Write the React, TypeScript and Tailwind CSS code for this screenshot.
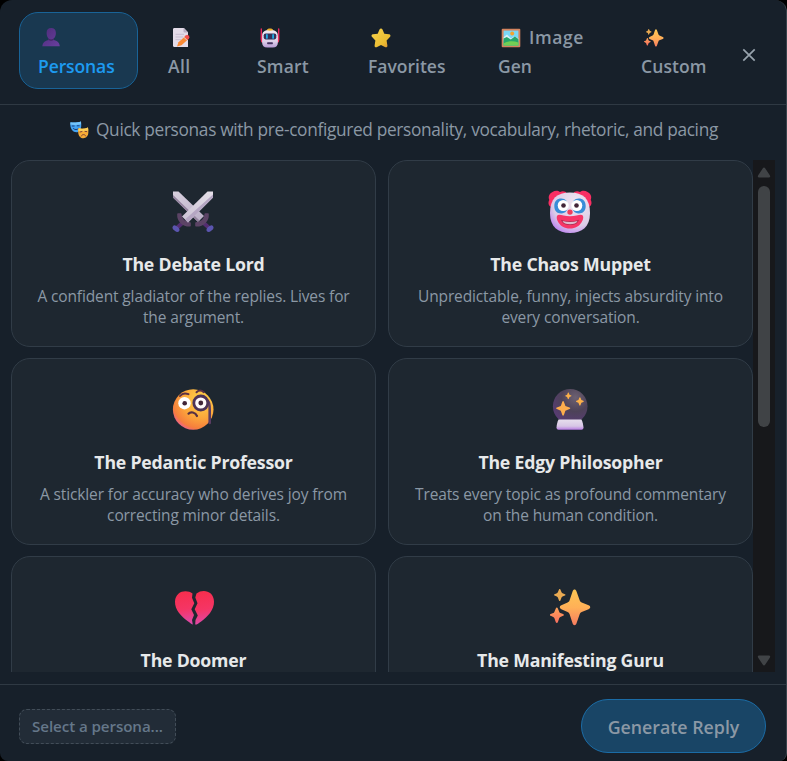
import type { ReactNode } from "react";

function Svg({ box, className, children }: { box: string; className: string; children: ReactNode }) {
  return (
    <svg viewBox={box} className={className} fill="none" aria-hidden="true">
      {children}
    </svg>
  );
}

function UserIcon() {
  return (
    <Svg box="0 0 18 19" className="h-[19px] w-[18px]">
      <defs>
        <linearGradient id="user" x1="0" y1="0" x2="1" y2="1">
          <stop stopColor="#4c2c78" />
          <stop offset="1" stopColor="#6a3fa0" />
        </linearGradient>
      </defs>
      <path d="M4.6 5C4.6 1.8 6.2 0 9.2 0s4.700 1.800 4.700 5c0 2.700-1 4.600-2.300 5.600v1.500c3.500.5 5.900 2.500 6.200 6.200H.3c.3-3.700 2.600-5.700 6.200-6.200v-1.600C5.400 9.400 4.600 7.500 4.600 5Z" fill="url(#user)" />
      <path d="M6.500 10.500c1.600 1.300 3.500 1.300 5.100.1v1.500c-1.500.8-3.500.8-5.100 0Z" fill="#412463" />
    </Svg>
  );
}

function MemoIcon() {
  return (
    <Svg box="0 0 18 19" className="h-[19px] w-[18px]">
      <path d="M2 0h10l4 4.200V19H2a1.500 1.500 0 0 1-1-1.500v-16A1.500 1.500 0 0 1 2 0Z" fill="#e4dce9" />
      <path d="m11.500 0 4.500 4.500h-3.500a1 1 0 0 1-1-1Z" fill="#b9afc4" />
      <path d="M3.500 6.300H12M3.500 9H11M3.500 11.700H9" stroke="#c7bdd1" />
      <path d="m6.500 14.300 7-6.400 3 3-7 6.400L5 18.500Z" fill="#f98a35" />
      <path d="m12.500 8.800 1.600-1.500a1.500 1.500 0 0 1 2 0l1 1a1.500 1.500 0 0 1 0 2L15.500 12Z" fill="#f2504e" />
      <path d="m12 9.300 3 3" stroke="#d8d1df" />
    </Svg>
  );
}

function RobotIcon() {
  return (
    <Svg box="0 0 20 20" className="h-5 w-5">
      <defs>
        <linearGradient id="robot" x1="0" y1="0" x2="0" y2="1">
          <stop stopColor="#f1e9f3" />
          <stop offset=".65" stopColor="#ded1e8" />
          <stop offset="1" stopColor="#b79ad5" />
        </linearGradient>
      </defs>
      <path d="M1.300 1v11M18.700 1v11" stroke="#e72860" strokeWidth="1.400" strokeLinecap="round" />
      <path d="M1 8.500h2v6H2a1 1 0 0 1-1-1ZM17 8.500h2v5a1 1 0 0 1-1 1h-1Z" fill="#ef315f" />
      <path d="M10 1.800c5.500 0 7.900 2.300 7.900 6.200v6.200c0 3.500-1.700 5.400-5.200 5.400H7.300c-3.500 0-5.200-1.900-5.200-5.400V8c0-3.900 2.400-6.200 7.900-6.200Z" fill="url(#robot)" />
      <path d="M6.700 2.300C7 1 8.300.4 10 .4s3 .6 3.300 1.900c-2 .6-4.600.6-6.600 0Z" fill="#eaae2f" />
      <rect x="3.700" y="5.500" width="12.600" height="5.900" rx="1.800" fill="#373057" />
      <path d="M6.900 6.900v3.100M13.100 6.900v3.100" stroke="#1fb4ef" strokeWidth="1.700" strokeLinecap="round" />
      <rect x="7.100" y="14.300" width="5.800" height="2" rx=".7" fill="#43315f" />
    </Svg>
  );
}

function StarIcon() {
  return (
    <Svg box="0 0 20 20" className="h-5 w-5">
      <defs>
        <linearGradient id="star" x1="0" y1="0" x2="1" y2="1">
          <stop stopColor="#f7d44d" />
          <stop offset=".7" stopColor="#ebbc31" />
          <stop offset="1" stopColor="#d98b31" />
        </linearGradient>
      </defs>
      <path d="M8.500 1.500c.7-1.300 2.300-1.300 3 0l1.800 4.200 4.700.6c1.500.2 2 1.700.9 2.800l-3.300 3.300.8 5c.2 1.600-1.200 2.400-2.500 1.700L10 17l-3.900 2.100c-1.300.7-2.700-.1-2.500-1.700l.8-5-3.300-3.300C0 8 .5 6.500 2 6.300l4.700-.6Z" fill="url(#star)" />
    </Svg>
  );
}

function PictureIcon() {
  return (
    <Svg box="0 0 20 20" className="h-5 w-5">
      <rect x=".7" y=".7" width="18.600" height="18.600" rx="1" fill="#d5845e" />
      <rect x="2.600" y="2.600" width="14.800" height="14.800" fill="#7bd8f6" />
      <path d="M2.600 9.200 6 6.500l4 4 3-2 4.400 1.700v2.400H2.600Z" fill="#d7eff9" />
      <path d="m2.600 10.600 3.200-1.500 4 2.300 4-2.800 3.600 2.400v6.400H2.600Z" fill="#26a66b" />
      <path d="M2.600 15.300c4-2 9-3 14.800-.8v2.900H2.600Z" fill="#72cf54" />
      <circle cx="11.200" cy="5.500" r="2" fill="#f5a22d" />
    </Svg>
  );
}

function SparklesIcon({ className }: { className: string }) {
  return (
    <Svg box="0 0 42 38" className={className}>
      <defs>
        <linearGradient id="spark" x1="0" y1="0" x2="0" y2="1">
          <stop stopColor="#fcc653" />
          <stop offset=".5" stopColor="#ffb057" />
          <stop offset="1" stopColor="#f77c60" />
        </linearGradient>
        <linearGradient id="sparkRed" x1="0" y1="0" x2="0" y2="1">
          <stop stopColor="#fba259" />
          <stop offset="1" stopColor="#fa705f" />
        </linearGradient>
      </defs>
      <path d="M23.200 2.300c.8-2.300 3.100-2.300 3.900 0l3.400 9.500c.4 1 1 1.600 2 2l7.100 3c2.300.9 2.300 3.200 0 4.100l-7.100 2.800c-1 .4-1.600 1-2 2l-3.400 9.800c-.8 2.300-3.100 2.300-3.900 0L20 25.700c-.4-1-1-1.600-2-2l-6.400-2.800c-2.200-.9-2.200-3.200 0-4.100l6.400-3c1-.4 1.600-1 2-2Z" fill="url(#spark)" />
      <path d="M9.200.4c.4-.7 1-.7 1.400 0l1.200 2.900c.2.500.5.800 1 1l2.500 1c.7.300.7 1.100 0 1.400l-2.500 1c-.5.200-.8.500-1 1l-1.200 3c-.4.700-1 .7-1.400 0L8 8.700c-.2-.5-.5-.8-1-1l-2.400-1c-.7-.3-.7-1.100 0-1.400l2.400-1c.5-.2.800-.5 1-1Z" fill="#e9aa52" />
      <path d="M5.900 19.900c.5-1.100 1.600-1.100 2.100 0l1.500 3.600c.2.600.6.900 1.100 1.100l2.800 1.100c1.100.4 1.100 1.500 0 1.900l-2.800 1.200c-.5.200-.9.500-1.100 1.100L8 34.100c-.5 1.100-1.600 1.100-2.100 0l-1.500-4.200c-.2-.6-.6-.9-1.100-1.100L.6 27.600c-1.100-.4-1.100-1.500 0-1.900l2.700-1.100c.5-.2.900-.5 1.100-1.100Z" fill="url(#sparkRed)" />
    </Svg>
  );
}

function MasksIcon() {
  return (
    <Svg box="0 0 19 18" className="h-[18px] w-[19px]">
      <path d="M.5 1.200C2.500 2 8 1.600 11 .5c.5 4 .5 7-1.500 9.200C7.500 12.200 4 11.500 2 9 .4 6.800 0 4 .5 1.200Z" fill="#43a2f2" />
      <path d="M.5 1.200C3 2 8 1.600 11 .5v2.700C7 4.200 3.500 4.200.3 3.500Z" fill="#75c4fa" />
      <path d="M2.200 5h2m3-.2h2M3.500 7.600c1.500 1.500 3.500 1.400 5-.1" stroke="#1c3f78" strokeWidth="1" strokeLinecap="round" />
      <path d="M8.500 7.300c3 .9 6.500.5 9.500-.7.600 4 .6 7-1 9-2.300 2.500-5.600 2-7.400-.2-1.500-2-1.700-5-1.100-8.100Z" fill="#f7ac36" />
      <path d="M8.500 7.300c3 .9 6.500.5 9.500-.7l.3 3c-3.300 1-6.500 1-9.900.3Z" fill="#fbcf59" />
      <path d="m10.100 11 1.900-.5m3-.1 1.700.2M11.300 15c1-2 3.500-2 4.500 0" stroke="#7c4139" strokeWidth="1" strokeLinecap="round" />
    </Svg>
  );
}

function SwordsIcon() {
  return (
    <Svg box="0 0 44 44" className="mt-[1px] h-11 w-11">
      <defs>
        <linearGradient id="bladeA" x1="0" y1="1" x2="1" y2="0">
          <stop stopColor="#c9c0d3" />
          <stop offset="1" stopColor="#e6e0e9" />
        </linearGradient>
        <linearGradient id="bladeB" x1="0" y1="0" x2="1" y2="1">
          <stop stopColor="#d8d0de" />
          <stop offset="1" stopColor="#b9adc6" />
        </linearGradient>
      </defs>
      <path d="m5.800 38 7.700-7M38.200 38l-7.700-7" stroke="#532d70" strokeWidth="4" />
      <ellipse cx="5" cy="38.700" rx="4" ry="2.400" transform="rotate(40 5 38.700)" fill="#5b55af" />
      <ellipse cx="39" cy="38.700" rx="4" ry="2.400" transform="rotate(-40 39 38.700)" fill="#5b55af" />
      <path d="M2 1.500h5.500l25.500 24.500-6 6L2 7.500Z" fill="url(#bladeB)" />
      <path d="m2 5 26.500 25.500-1.500 1.500L2 7.500Z" fill="#94839f" />
      <path d="M7 24h2.700c.2 4.900 3.500 8.300 9.300 9v2.700C12 36 6.500 31 7 24ZM37 24h-2.700c-.2 4.900-3.500 8.300-9.300 9v2.700C32 36 37.500 31 37 24Z" fill="#5c4466" stroke="#5c4466" strokeWidth="1.600" strokeLinejoin="round" />
      <path d="M42 1.500h-5.500L11 26.500l6 6L42 7.500Z" fill="url(#bladeA)" />
      <path d="M42 4.500 14 29.500l3 3L42 7.500Z" fill="#b5a6c3" />
    </Svg>
  );
}

function ClownIcon() {
  return (
    <Svg box="0 0 44 44" className="mt-[1px] h-11 w-11">
      <defs>
        <radialGradient id="clown" cx=".65" cy=".25" r=".9">
          <stop stopColor="#eee5f0" />
          <stop offset=".65" stopColor="#dccce7" />
          <stop offset="1" stopColor="#b36df4" />
        </radialGradient>
      </defs>
      <path d="M3.300 17C0 16 0 12 1.300 10 0 7 1 3.500 4.500 2 7 .2 10 .3 12 2c3-1.500 6-.5 6.500 1.500h7C26 1.500 29 .5 32 2c2-1.700 5-1.800 7.500 0 3.500 1.500 4.500 5 3.200 8 1.300 2 1.300 6-2 7Z" fill="#f92f63" />
      <path d="M22 2.500c13 0 20 6 20 20.500 0 14-8 20-20 20S2 37 2 23C2 8.500 9 2.500 22 2.500Z" fill="url(#clown)" />
      <path d="M6.300 16c0-5 2.700-7.600 7-7.600s6.500 3 6.500 7.300-2.200 7.700-6.500 7.700-7-2.400-7-7.400ZM37.700 16c0-5-2.700-7.600-7-7.600s-6.500 3-6.500 7.300 2.200 7.700 6.500 7.700 7-2.400 7-7.400Z" fill="#398dd8" />
      <circle cx="15.200" cy="15.500" r="5.500" fill="#fff" />
      <circle cx="28.800" cy="15.500" r="5.500" fill="#fff" />
      <circle cx="15.500" cy="15.500" r="2.300" fill="#412538" />
      <circle cx="28.500" cy="15.500" r="2.300" fill="#412538" />
      <circle cx="22" cy="22.100" r="2.700" fill="#ef3e5b" />
      <path d="M9.300 25.500c1.800-1.900 6 .8 12.700.8s10.900-2.700 12.700-.8c2 2-1.300 13-12.700 13S7.300 27.500 9.300 25.500Z" fill="#f73567" />
      <path d="M13 29.700c5.500 2 12.500 2 18 0-1.600 4.500-5 5.300-9 5.300s-7.400-.8-9-5.300Z" fill="#ad294d" />
      <path d="M14.500 31c5 1.300 10 1.300 15 0-1 2.500-3.300 3.200-7.500 3.200s-6.500-.7-7.500-3.200Z" fill="#dcb9cb" />
    </Svg>
  );
}

function MonocleIcon() {
  return (
    <Svg box="0 0 44 44" className="h-11 w-11">
      <defs>
        <radialGradient id="monocle" cx=".7" cy=".25" r=".85">
          <stop stopColor="#fed549" />
          <stop offset=".55" stopColor="#fca63b" />
          <stop offset=".85" stopColor="#f67e3d" />
          <stop offset="1" stopColor="#ed5b9d" />
        </radialGradient>
      </defs>
      <circle cx="22.200" cy="22.500" r="20.300" fill="url(#monocle)" />
      <path d="M9 9c2-2.500 5-3.300 8.500-1.800M25.500 5.200c2-1.900 5-2 7.300 0" stroke="#5b3146" strokeWidth="2" strokeLinecap="round" />
      <circle cx="13.500" cy="16.200" r="6.200" fill="#fff" />
      <circle cx="13.700" cy="16.200" r="2.300" fill="#412538" />
      <path d="M37 14c1.500 1 1.700 4 1.700 9v13" stroke="#5b3c62" strokeWidth="2.600" strokeLinecap="round" />
      <circle cx="29.800" cy="16" r="7" fill="#fffafa" stroke="#4d3357" strokeWidth="2.800" />
      <circle cx="29.800" cy="16" r="2.400" fill="#412538" />
      <path d="M17.500 26.700c2-2.400 7-1.600 8.500 2.300" stroke="#563044" strokeWidth="2.200" strokeLinecap="round" />
    </Svg>
  );
}

function CrystalBallIcon() {
  return (
    <Svg box="0 0 44 44" className="h-11 w-11">
      <defs>
        <radialGradient id="ball" cx=".65" cy=".25" r=".8">
          <stop stopColor="#6d6172" />
          <stop offset=".5" stopColor="#4d4258" />
          <stop offset="1" stopColor="#593b76" />
        </radialGradient>
        <linearGradient id="base" x1="0" y1="0" x2="0" y2="1">
          <stop stopColor="#e7deed" />
          <stop offset=".65" stopColor="#d7c6e5" />
          <stop offset="1" stopColor="#b87ce3" />
        </linearGradient>
      </defs>
      <circle cx="22.200" cy="19.300" r="17.300" fill="url(#ball)" />
      <path d="M10.500 32.500h23c1.300 2.500 1.700 5.500 2 8-.1 1.700-.9 2.200-2 2.200h-23c-1.100 0-1.900-.5-2-2.200.3-2.500.7-5.500 2-8Z" fill="url(#base)" />
      <path d="M14.300 14.700c.4-1 1.200-1 1.600 0l1.500 4.200 4.100 1.500c1 .4 1 1.200 0 1.600l-4.100 1.700-1.500 4.400c-.4 1-1.200 1-1.600 0l-1.500-4.400-3.900-1.700c-1-.4-1-1.200 0-1.600l3.900-1.500Z" fill="#fdad4d" />
      <path d="M19.800 6c.3-.6.700-.6 1 0l.7 1.700 1.700.7c.5.200.5.600 0 .8l-1.700.7-.7 1.900c-.3.600-.7.600-1 0l-.7-1.900-1.600-.7c-.5-.2-.5-.6 0-.8l1.600-.7Z" fill="#fcb04a" />
      <path d="M31.300 10.800c.3-.7.900-.7 1.200 0l.9 2.100 1.900.8c.6.300.6.900 0 1.200l-1.900.8-.9 2.400c-.3.700-.9.700-1.200 0l-.9-2.400-1.900-.8c-.6-.3-.6-.9 0-1.200l1.900-.8Z" fill="#fcb04a" />
    </Svg>
  );
}

function BrokenHeartIcon() {
  return (
    <Svg box="0 0 44 44" className="mt-[1px] h-11 w-11">
      <defs>
        <linearGradient id="heart" x1=".4" y1="0" x2=".5" y2="1">
          <stop stopColor="#f62e4d" />
          <stop offset=".55" stopColor="#f53565" />
          <stop offset="1" stopColor="#dc4aac" />
        </linearGradient>
      </defs>
      <path d="M21.500 7.500C16 3 4.500 4.500 4 15.500c-.3 8.500 6.500 15 12.500 19.500 2.500 1.900 4.500 3.500 5.300 3.500L21 34l2-5-2.700-5.700 3-6-2.300-5.500Z" fill="url(#heart)" />
      <path d="M25.500 7.500C32 2.500 42.700 5 43 15.500c.3 8.500-6.700 15.500-12.500 19.700-3 2.200-5.300 3.800-6.300 3.300l.3-4.500 2.300-4.500-3.100-6.200 2.800-6-2.200-5.800Z" fill="url(#heart)" />
    </Svg>
  );
}

const tabs = [
  { label: "Personas", icon: <UserIcon />, box: "w-[119px] rounded-[19px] border-[#196397] bg-[#193850] text-[#1d9bf0]", inset: "pl-[4px]", word: "tracking-[-0.1px]" },
  { label: "All", icon: <MemoIcon />, box: "w-[78px] border-transparent", inset: "pl-1", word: "tracking-[0.4px]" },
  { label: "Smart", icon: <RobotIcon />, box: "w-[100px] border-transparent", inset: "pl-[3px]", word: "tracking-[0.2px]" },
  { label: "Favorites", icon: <StarIcon />, box: "w-[119px] border-transparent", inset: "pl-[3px]", word: "" },
  { label: "Gen", icon: <PictureIcon />, after: "Image", box: "w-[131px] border-transparent", inset: "pl-[3px] tracking-[0.6px]", word: "" },
  { label: "Custom", icon: <SparklesIcon className="h-[18px] w-5" />, box: "w-[107px] border-transparent", inset: "pl-[4px]", word: "pl-[1px] tracking-[0.1px]" },
];

const personas = [
  { name: "The Debate Lord", icon: <SwordsIcon />, lines: ["A confident gladiator of the replies. Lives for", "the argument."] },
  { name: "The Chaos Muppet", icon: <ClownIcon />, lines: ["Unpredictable, funny, injects absurdity into", "every conversation."] },
  { name: "The Pedantic Professor", icon: <MonocleIcon />, lines: ["A stickler for accuracy who derives joy from", "correcting minor details."] },
  { name: "The Edgy Philosopher", icon: <CrystalBallIcon />, lines: ["Treats every topic as profound commentary", "on the human condition."] },
  { name: "The Doomer", icon: <BrokenHeartIcon />, lines: [] },
  { name: "The Manifesting Guru", icon: <SparklesIcon className="mt-[4px] ml-[2px] h-[37px] w-[41px]" />, lines: [] },
];

export default function App() {
  return (
    <div className="h-[761px] w-[787px] overflow-hidden bg-black font-['Open_Sans','Noto_Sans',sans-serif] text-[#8b98a5]">
      <div className="flex h-full flex-col overflow-hidden rounded-t-[12px] rounded-b-[8px] border-r border-[#38444d] bg-[#17202a]">
        <header className="flex h-[105px] shrink-0 items-start border-b border-[#2f3943] pt-3 pl-[19px]">
          <nav className="flex gap-[11px]">
            {tabs.map((tab) => (
              <button key={tab.label} className={`flex h-[77px] flex-col items-start border pt-[10px] pl-[18px] text-[17.5px] leading-[29px] font-semibold ${tab.box}`}>
                <span className={`flex h-[29px] items-center gap-2 whitespace-nowrap ${tab.inset}`}>
                  {tab.icon}
                  {tab.after}
                </span>
                <span className={`whitespace-nowrap ${tab.word}`}>{tab.label}</span>
              </button>
            ))}
          </nav>
          <button className="mt-[36px] ml-[14px] flex" aria-label="Close">
            <svg viewBox="0 0 14 14" className="h-[14px] w-[14px]" fill="none" stroke="#98a3ad" strokeWidth="1.700">
              <path d="m1.300 1.300 11.400 11.400m0-11.400L1.300 12.700" />
            </svg>
          </button>
        </header>

        <main className="flex h-[579px] shrink-0 flex-col">
          <p className="flex h-[55px] shrink-0 items-center gap-[7px] pb-[5px] pl-[70px] text-[17.300px] leading-6 tracking-[-0.33px] whitespace-nowrap">
            <MasksIcon />
            <span>Quick personas with pre-configured personality, vocabulary, rhetoric, and pacing</span>
          </p>
          <div className="ml-[11px] flex h-[512px] w-[764px] overflow-hidden">
            <div className="grid w-[742px] shrink-0 grid-cols-2 content-start gap-x-3 gap-y-[11px]">
              {personas.map((p) => (
                <article key={p.name} className="flex h-[187px] flex-col items-center rounded-[19px] border border-[#313c47] bg-[#1e2730] pt-[28px]">
                  <div className="mr-[2px] flex h-11 items-start">{p.icon}</div>
                  <h3 className="mt-[17px] h-7 text-[17.700px] leading-7 font-bold tracking-[-0.2px] whitespace-nowrap text-[#e7e9ea]">{p.name}</h3>
                  {p.lines.length > 0 && (
                    <p className="mt-[8px] text-center text-[15.500px] leading-[21px] tracking-[-0.13px] whitespace-nowrap">
                      {p.lines[0]}
                      <br />
                      {p.lines[1]}
                    </p>
                  )}
                </article>
              ))}
            </div>
            <div className="flex w-[22px] shrink-0 flex-col items-center bg-[#17181b]">
              <svg viewBox="0 0 14 11" className="mt-[7px] h-[11px] w-[14px]">
                <path d="M5.700 1.500Q7-.5 8.300 1.500l4.500 6.800q1.200 2.200-1 2.200H2.200q-2.200 0-1-2.200Z" fill="#404346" />
              </svg>
              <div className="mt-2 h-[241px] w-3 rounded-full bg-[#404346]" />
              <svg viewBox="0 0 14 11" className="mt-auto mb-[6px] h-[11px] w-[14px] rotate-180">
                <path d="M5.700 1.500Q7-.5 8.300 1.500l4.500 6.800q1.200 2.200-1 2.200H2.200q-2.200 0-1-2.200Z" fill="#404346" />
              </svg>
            </div>
          </div>
        </main>

        <footer className="flex h-[77px] shrink-0 items-start justify-between border-t border-[#2f3943] pr-5 pl-[19px]">
          <div className="mt-6 flex h-[35px] w-[157px] items-center rounded-[8px] border border-dashed border-[#424d58] bg-[#222c37] pl-3 text-[15.200px] font-semibold tracking-[-0.1px] whitespace-nowrap text-[#657789]">
            Select a persona...
          </div>
          <button className="mt-[14px] flex h-[54px] w-[185px] items-center justify-center rounded-full border border-[#1b6ca6] bg-[#194566] pt-[2px] text-[17.800px] font-semibold whitespace-nowrap text-[#8b98a5]">
            Generate Reply
          </button>
        </footer>
      </div>
    </div>
  );
}
